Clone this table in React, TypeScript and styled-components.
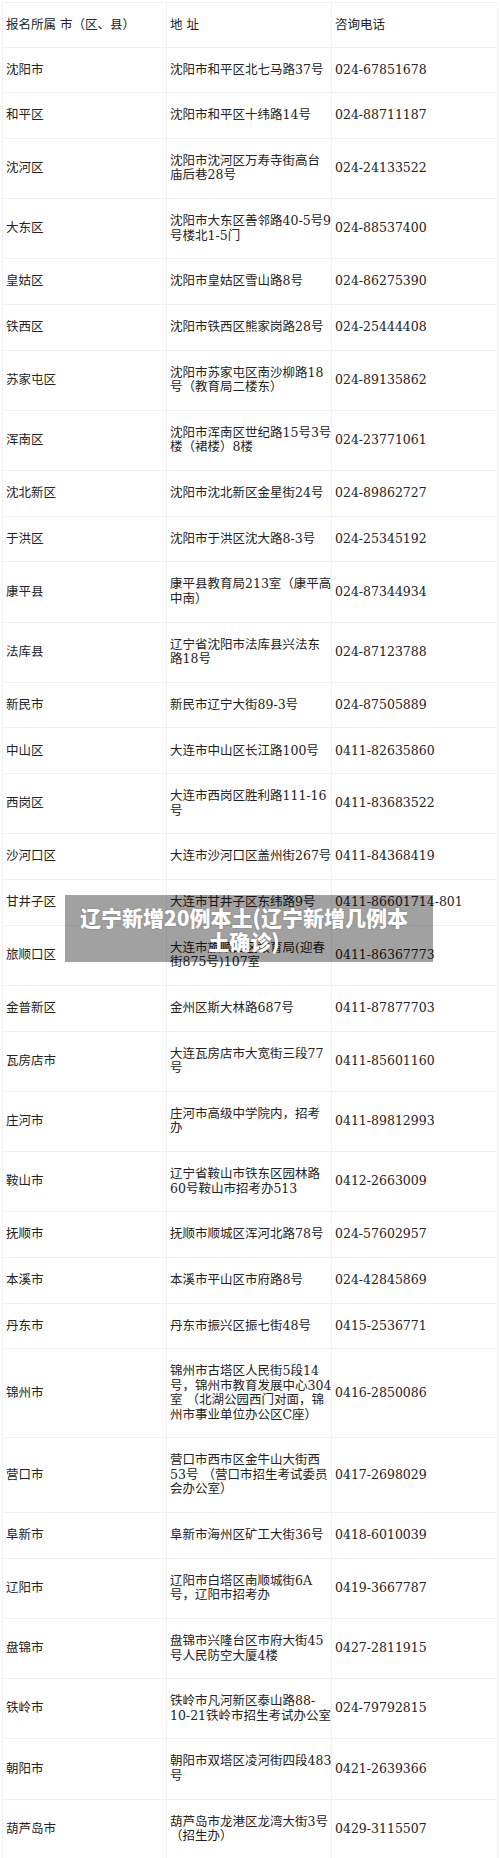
import styled, { createGlobalStyle } from "styled-components";

const GlobalStyle = createGlobalStyle`
  html, body {
    margin: 0;
    padding: 0;
    background: #ffffff;
  }
`;

type Office = {
  area: string;
  address: string[];
  phone: string;
};

const offices: Office[] = [
  { area: "沈阳市", address: ["沈阳市和平区北七马路37号"], phone: "024-67851678" },
  { area: "和平区", address: ["沈阳市和平区十纬路14号"], phone: "024-88711187" },
  { area: "沈河区", address: ["沈阳市沈河区万寿寺街高台", "庙后巷28号"], phone: "024-24133522" },
  { area: "大东区", address: ["沈阳市大东区善邻路40-5号9", "号楼北1-5门"], phone: "024-88537400" },
  { area: "皇姑区", address: ["沈阳市皇姑区雪山路8号"], phone: "024-86275390" },
  { area: "铁西区", address: ["沈阳市铁西区熊家岗路28号"], phone: "024-25444408" },
  { area: "苏家屯区", address: ["沈阳市苏家屯区南沙柳路18", "号（教育局二楼东）"], phone: "024-89135862" },
  { area: "浑南区", address: ["沈阳市浑南区世纪路15号3号", "楼（裙楼）8楼"], phone: "024-23771061" },
  { area: "沈北新区", address: ["沈阳市沈北新区金星街24号"], phone: "024-89862727" },
  { area: "于洪区", address: ["沈阳市于洪区沈大路8-3号"], phone: "024-25345192" },
  { area: "康平县", address: ["康平县教育局213室（康平高", "中南）"], phone: "024-87344934" },
  { area: "法库县", address: ["辽宁省沈阳市法库县兴法东", "路18号"], phone: "024-87123788" },
  { area: "新民市", address: ["新民市辽宁大街89-3号"], phone: "024-87505889" },
  { area: "中山区", address: ["大连市中山区长江路100号"], phone: "0411-82635860" },
  { area: "西岗区", address: ["大连市西岗区胜利路111-16", "号"], phone: "0411-83683522" },
  { area: "沙河口区", address: ["大连市沙河口区盖州街267号"], phone: "0411-84368419" },
  { area: "甘井子区", address: ["大连市甘井子区东纬路9号"], phone: "0411-86601714-801" },
  { area: "旅顺口区", address: ["大连市旅顺口区教育局(迎春", "街875号)107室"], phone: "0411-86367773" },
  { area: "金普新区", address: ["金州区斯大林路687号"], phone: "0411-87877703" },
  { area: "瓦房店市", address: ["大连瓦房店市大宽街三段77", "号"], phone: "0411-85601160" },
  { area: "庄河市", address: ["庄河市高级中学院内，招考", "办"], phone: "0411-89812993" },
  { area: "鞍山市", address: ["辽宁省鞍山市铁东区园林路", "60号鞍山市招考办513"], phone: "0412-2663009" },
  { area: "抚顺市", address: ["抚顺市顺城区浑河北路78号"], phone: "024-57602957" },
  { area: "本溪市", address: ["本溪市平山区市府路8号"], phone: "024-42845869" },
  { area: "丹东市", address: ["丹东市振兴区振七街48号"], phone: "0415-2536771" },
  {
    area: "锦州市",
    address: [
      "锦州市古塔区人民街5段14",
      "号，锦州市教育发展中心304",
      "室 （北湖公园西门对面，锦",
      "州市事业单位办公区C座）",
    ],
    phone: "0416-2850086",
  },
  {
    area: "营口市",
    address: ["营口市西市区金牛山大街西", "53号 （营口市招生考试委员", "会办公室）"],
    phone: "0417-2698029",
  },
  { area: "阜新市", address: ["阜新市海州区矿工大街36号"], phone: "0418-6010039" },
  { area: "辽阳市", address: ["辽阳市白塔区南顺城街6A", "号，辽阳市招考办"], phone: "0419-3667787" },
  { area: "盘锦市", address: ["盘锦市兴隆台区市府大街45", "号人民防空大厦4楼"], phone: "0427-2811915" },
  { area: "铁岭市", address: ["铁岭市凡河新区泰山路88-", "10-21铁岭市招生考试办公室"], phone: "024-79792815" },
  { area: "朝阳市", address: ["朝阳市双塔区凌河街四段483", "号"], phone: "0421-2639366" },
  { area: "葫芦岛市", address: ["葫芦岛市龙港区龙湾大街3号", "（招生办）"], phone: "0429-3115507" },
];

const Page = styled.div`
  position: relative;
  padding: 2px 3px 0 2px;
  font-family: "DejaVu Serif", "Noto Sans CJK SC", serif;
  color: #222222;
`;

const Table = styled.table`
  width: 495px;
  border-collapse: collapse;
  table-layout: fixed;
  font-size: 12.5px;
  line-height: 14.5px;
`;

const Cell = styled.td`
  border: 1px solid #f1f1f1;
  padding: 15.1px 2px 15.1px 3px;
  vertical-align: middle;
  white-space: nowrap;
  overflow: visible;
`;

const HeadCell = styled(Cell).attrs({ as: "th" })`
  font-weight: normal;
  text-align: left;
  padding-top: 14.5px;
  padding-bottom: 14.5px;
`;

const Banner = styled.div`
  position: absolute;
  top: 895px;
  left: 65px;
  width: 368px;
  height: 67px;
  box-sizing: border-box;
  padding: 9.5px 20px 9.5px 10px;
  background: rgba(0, 0, 0, 0.37);
  color: #ffffff;
  font-family: "Noto Sans CJK SC", "Noto Sans", sans-serif;
  font-weight: 900;
  font-size: 21px;
  line-height: 24px;
  text-align: center;
  text-shadow: 0 0 2px rgba(0, 0, 0, 0.25);
`;

const App = () => {
  return (
    <Page>
      <GlobalStyle />
      <Table>
        <colgroup>
          <col style={{ width: 164 }} />
          <col style={{ width: 165 }} />
          <col style={{ width: 166 }} />
        </colgroup>
        <thead>
          <tr>
            <HeadCell>报名所属 市（区、县）</HeadCell>
            <HeadCell>地 址</HeadCell>
            <HeadCell>咨询电话</HeadCell>
          </tr>
        </thead>
        <tbody>
          {offices.map((o) => (
            <tr key={o.area}>
              <Cell>{o.area}</Cell>
              <Cell>
                {o.address.map((line, i) => (
                  <div key={i}>{line}</div>
                ))}
              </Cell>
              <Cell>{o.phone}</Cell>
            </tr>
          ))}
        </tbody>
      </Table>
      <Banner>辽宁新增20例本土(辽宁新增几例本土确诊)</Banner>
    </Page>
  );
};

export default App;
